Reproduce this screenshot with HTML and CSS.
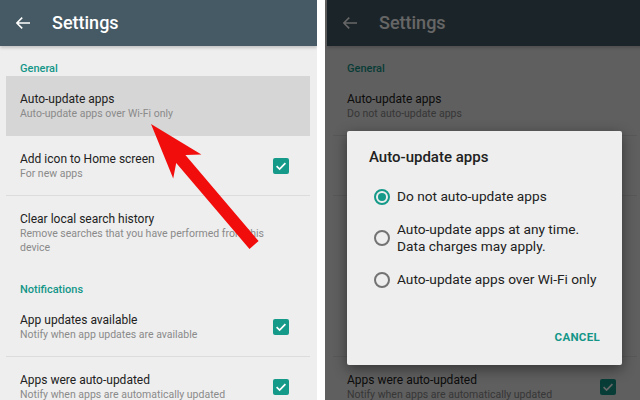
FILE: index.html
```html
<!DOCTYPE html>
<html>
<head>
<meta charset="utf-8">
<link rel="stylesheet" href="styles.css">
</head>
<body>
<div class="stage">
  <div class="panel">
    <div class="screen">
      <header class="appbar">
        <svg class="back" width="14" height="12" viewBox="0 0 14 12"><path d="M0.8 6H14M6.2 0.6L0.8 6L6.2 11.4" fill="none" stroke="#fff" stroke-width="1.6"/></svg>
        <h1>Settings</h1>
      </header>
      <div class="list">
        <div class="section">General</div>
        <div class="row selected">
          <div class="text"><div class="title">Auto-update apps</div><div class="sub">Auto-update apps over Wi-Fi only</div></div>
        </div>
        <div class="row divided">
          <div class="text"><div class="title">Add icon to Home screen</div><div class="sub">For new apps</div></div>
          <span class="check"><svg width="16" height="16" viewBox="0 0 16 16"><path d="M3.6 8.2L6.6 11.1L12.4 5.2" fill="none" stroke="#fff" stroke-width="1.7"/></svg></span>
        </div>
        <div class="row">
          <div class="text"><div class="title">Clear local search history</div><div class="sub">Remove searches that you have performed from this device</div></div>
        </div>
        <div class="section">Notifications</div>
        <div class="row divided">
          <div class="text"><div class="title">App updates available</div><div class="sub">Notify when app updates are available</div></div>
          <span class="check"><svg width="16" height="16" viewBox="0 0 16 16"><path d="M3.6 8.2L6.6 11.1L12.4 5.2" fill="none" stroke="#fff" stroke-width="1.7"/></svg></span>
        </div>
        <div class="row">
          <div class="text"><div class="title">Apps were auto-updated</div><div class="sub">Notify when apps are automatically updated</div></div>
          <span class="check"><svg width="16" height="16" viewBox="0 0 16 16"><path d="M3.6 8.2L6.6 11.1L12.4 5.2" fill="none" stroke="#fff" stroke-width="1.7"/></svg></span>
        </div>
      </div>
    </div>
    <svg class="arrow" width="317" height="400" viewBox="0 0 317 400"><polygon points="151,124 201.4,154.6 185.4,155.1 258.6,241.1 249.5,248.9 176.2,162.9 173.2,178.6" fill="#f20d0d"/></svg>
  </div>

  <div class="panel right">
    <div class="screen">
      <header class="appbar">
        <svg class="back" width="14" height="12" viewBox="0 0 14 12"><path d="M0.8 6H14M6.2 0.6L0.8 6L6.2 11.4" fill="none" stroke="#fff" stroke-width="1.6"/></svg>
        <h1>Settings</h1>
      </header>
      <div class="list">
        <div class="section">General</div>
        <div class="row divided">
          <div class="text"><div class="title">Auto-update apps</div><div class="sub">Do not auto-update apps</div></div>
        </div>
        <div class="row divided">
          <div class="text"><div class="title">Add icon to Home screen</div><div class="sub">For new apps</div></div>
          <span class="check"><svg width="16" height="16" viewBox="0 0 16 16"><path d="M3.6 8.2L6.6 11.1L12.4 5.2" fill="none" stroke="#fff" stroke-width="1.7"/></svg></span>
        </div>
        <div class="row">
          <div class="text"><div class="title">Clear local search history</div><div class="sub">Remove searches that you have performed from this device</div></div>
        </div>
        <div class="section">Notifications</div>
        <div class="row divided">
          <div class="text"><div class="title">App updates available</div><div class="sub">Notify when app updates are available</div></div>
          <span class="check"><svg width="16" height="16" viewBox="0 0 16 16"><path d="M3.6 8.2L6.6 11.1L12.4 5.2" fill="none" stroke="#fff" stroke-width="1.7"/></svg></span>
        </div>
        <div class="row">
          <div class="text"><div class="title">Apps were auto-updated</div><div class="sub">Notify when apps are automatically updated</div></div>
          <span class="check"><svg width="16" height="16" viewBox="0 0 16 16"><path d="M3.6 8.2L6.6 11.1L12.4 5.2" fill="none" stroke="#fff" stroke-width="1.7"/></svg></span>
        </div>
      </div>
    </div>
    <div class="scrim"></div>
    <div class="dialog">
      <div class="dialog-title">Auto-update apps</div>
      <div class="option"><span class="radio on"></span><span class="label">Do not auto-update apps</span></div>
      <div class="option"><span class="radio"></span><span class="label">Auto-update apps at any time.<br>Data charges may apply.</span></div>
      <div class="option"><span class="radio"></span><span class="label">Auto-update apps over Wi-Fi only</span></div>
      <div class="actions"><span class="btn">CANCEL</span></div>
    </div>
  </div>
</div>
</body>
</html>
```
FILE: styles.css
```css
* { box-sizing: border-box; }
html, body { margin: 0; padding: 0; background: #fff; }
body { font-family: Roboto, "Liberation Sans", sans-serif; }

.stage {
  width: 640px;
  height: 400px;
  display: flex;
  gap: 8px;
  overflow: hidden;
}

.panel {
  position: relative;
  width: 317px;
  height: 400px;
  flex-shrink: 0;
  overflow: hidden;
  background: #eeeeee;
}
.panel.right { width: 315px; }

.screen { width: 317px; flex-shrink: 0; }
.right .screen { margin-left: 2px; }

.appbar {
  position: relative;
  z-index: 1;
  height: 46px;
  background: #455a64;
  display: flex;
  align-items: center;
  padding-left: 16px;
  box-shadow: 0 2px 3px rgba(0,0,0,0.18);
}
.back { margin-right: 22px; flex-shrink: 0; }
.appbar h1 {
  margin: 0;
  font-size: 18px;
  font-weight: 500;
  color: #fff;
  line-height: 22px;
}

.list { padding: 3px 7px 0 6px; }

.section {
  padding: 13px 14px 0;
  line-height: 14px;
  font-size: 11px;
  font-weight: 500;
  color: #139688;
}

.row {
  display: flex;
  align-items: center;
  padding: 15px 21px 15px 14px;
}
.row.divided { border-bottom: 1px solid #dcdcdc; padding-bottom: 14px; }
.row.selected { background: #d6d6d6; }
.text { flex: 1; min-width: 0; }
.title { font-size: 12px; line-height: 16px; color: #212121; }
.sub { font-size: 10.5px; line-height: 14px; color: #8a8a8a; }

.check {
  width: 16px;
  height: 16px;
  border-radius: 2px;
  background: #159a8a;
  flex-shrink: 0;
  display: flex;
}

.arrow { position: absolute; left: 0; top: 0; z-index: 2; }

.scrim { position: absolute; inset: 0; z-index: 2; background: rgba(0,0,0,0.6); }

.dialog {
  position: absolute;
  z-index: 3;
  left: 22px;
  top: 131px;
  width: 275px;
  background: #eeeeee;
  border-radius: 2px;
  box-shadow: 0 4px 14px rgba(0,0,0,0.45);
  padding: 16px 22px 21px 22px;
}
.dialog-title {
  font-size: 15px;
  font-weight: 500;
  line-height: 20px;
  color: #212121;
  margin-bottom: 13px;
}
.option {
  display: flex;
  align-items: center;
  padding: 8px 0;
}
.radio {
  width: 16px;
  height: 16px;
  border: 2px solid #737373;
  border-radius: 50%;
  margin-left: 5px;
  margin-right: 7px;
  flex-shrink: 0;
  display: flex;
  align-items: center;
  justify-content: center;
}
.radio.on { border-color: #159a8a; }
.radio.on::after {
  content: "";
  width: 8px;
  height: 8px;
  border-radius: 50%;
  background: #159a8a;
}
.label { font-size: 13.7px; line-height: 17px; color: #212121; white-space: nowrap; }
.actions { margin-top: 33px; text-align: right; line-height: 14px; }
.btn { font-size: 11.5px; font-weight: 700; color: #139688; letter-spacing: 0.3px; }
```
